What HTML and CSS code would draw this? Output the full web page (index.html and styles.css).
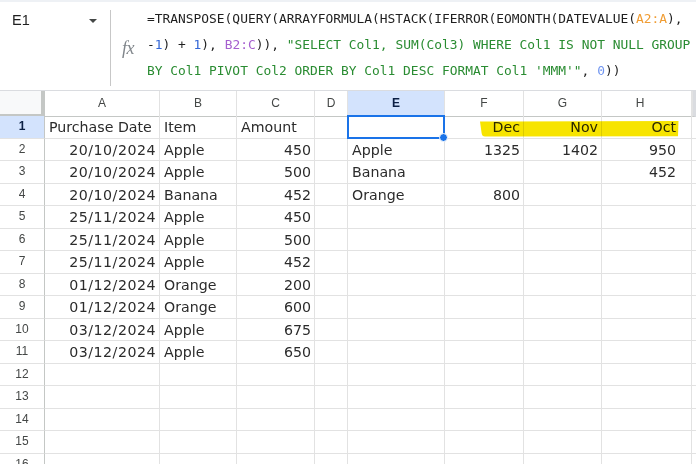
FILE: index.html
```html
<!DOCTYPE html>
<html>
<head>
<meta charset="utf-8">
<link rel="stylesheet" href="styles.css">
</head>
<body>
<div class="fbar">
  <div class="namebox">
    <span class="ref">E1</span>
    <span class="caret"></span>
  </div>
  <div class="fx">fx</div>
  <div class="formula">
    <div class="ln">=TRANSPOSE(QUERY(ARRAYFORMULA(HSTACK(IFERROR(EOMONTH(DATEVALUE(<span class="t-or">A2:A</span>),</div>
    <div class="ln">-<span class="t-num">1</span>) + <span class="t-num">1</span>), <span class="t-pu">B2:C</span>)), <span class="t-str">"SELECT Col1, SUM(Col3) WHERE Col1 IS NOT NULL GROUP</span></div>
    <div class="ln"><span class="t-str">BY Col1 PIVOT Col2 ORDER BY Col1 DESC FORMAT Col1 'MMM'"</span>, <span class="t-zero">0</span>))</div>
  </div>
</div>
<div class="sheet">
  <div class="row hdr">
    <div class="corner"></div><div class="ch">A</div><div class="ch">B</div><div class="ch">C</div><div class="ch">D</div><div class="ch on">E</div><div class="ch">F</div><div class="ch">G</div><div class="ch h">H</div><div class="ch last"></div>
  </div>
  <div class="row">
    <div class="rh on">1</div><div class="c">Purchase Date</div><div class="c">Item</div><div class="c">Amount</div><div class="c"></div><div class="c sel"><span class="handle"></span></div><div class="c r">Dec</div><div class="c r">Nov</div><div class="c r h">Oct</div><div class="c"></div>
  </div>
  <div class="row">
    <div class="rh">2</div><div class="c r d">20/10/2024</div><div class="c">Apple</div><div class="c r">450</div><div class="c"></div><div class="c">Apple</div><div class="c r">1325</div><div class="c r">1402</div><div class="c r h">950</div><div class="c"></div>
  </div>
  <div class="row">
    <div class="rh">3</div><div class="c r d">20/10/2024</div><div class="c">Apple</div><div class="c r">500</div><div class="c"></div><div class="c">Banana</div><div class="c"></div><div class="c"></div><div class="c r h">452</div><div class="c"></div>
  </div>
  <div class="row">
    <div class="rh">4</div><div class="c r d">20/10/2024</div><div class="c">Banana</div><div class="c r">452</div><div class="c"></div><div class="c">Orange</div><div class="c r">800</div><div class="c"></div><div class="c"></div><div class="c"></div>
  </div>
  <div class="row">
    <div class="rh">5</div><div class="c r d">25/11/2024</div><div class="c">Apple</div><div class="c r">450</div><div class="c"></div><div class="c"></div><div class="c"></div><div class="c"></div><div class="c"></div><div class="c"></div>
  </div>
  <div class="row">
    <div class="rh">6</div><div class="c r d">25/11/2024</div><div class="c">Apple</div><div class="c r">500</div><div class="c"></div><div class="c"></div><div class="c"></div><div class="c"></div><div class="c"></div><div class="c"></div>
  </div>
  <div class="row">
    <div class="rh">7</div><div class="c r d">25/11/2024</div><div class="c">Apple</div><div class="c r">452</div><div class="c"></div><div class="c"></div><div class="c"></div><div class="c"></div><div class="c"></div><div class="c"></div>
  </div>
  <div class="row">
    <div class="rh">8</div><div class="c r d">01/12/2024</div><div class="c">Orange</div><div class="c r">200</div><div class="c"></div><div class="c"></div><div class="c"></div><div class="c"></div><div class="c"></div><div class="c"></div>
  </div>
  <div class="row">
    <div class="rh">9</div><div class="c r d">01/12/2024</div><div class="c">Orange</div><div class="c r">600</div><div class="c"></div><div class="c"></div><div class="c"></div><div class="c"></div><div class="c"></div><div class="c"></div>
  </div>
  <div class="row">
    <div class="rh">10</div><div class="c r d">03/12/2024</div><div class="c">Apple</div><div class="c r">675</div><div class="c"></div><div class="c"></div><div class="c"></div><div class="c"></div><div class="c"></div><div class="c"></div>
  </div>
  <div class="row">
    <div class="rh">11</div><div class="c r d">03/12/2024</div><div class="c">Apple</div><div class="c r">650</div><div class="c"></div><div class="c"></div><div class="c"></div><div class="c"></div><div class="c"></div><div class="c"></div>
  </div>
  <div class="row">
    <div class="rh">12</div><div class="c"></div><div class="c"></div><div class="c"></div><div class="c"></div><div class="c"></div><div class="c"></div><div class="c"></div><div class="c"></div><div class="c"></div>
  </div>
  <div class="row">
    <div class="rh">13</div><div class="c"></div><div class="c"></div><div class="c"></div><div class="c"></div><div class="c"></div><div class="c"></div><div class="c"></div><div class="c"></div><div class="c"></div>
  </div>
  <div class="row">
    <div class="rh">14</div><div class="c"></div><div class="c"></div><div class="c"></div><div class="c"></div><div class="c"></div><div class="c"></div><div class="c"></div><div class="c"></div><div class="c"></div>
  </div>
  <div class="row">
    <div class="rh">15</div><div class="c"></div><div class="c"></div><div class="c"></div><div class="c"></div><div class="c"></div><div class="c"></div><div class="c"></div><div class="c"></div><div class="c"></div>
  </div>
  <div class="row">
    <div class="rh">16</div><div class="c"></div><div class="c"></div><div class="c"></div><div class="c"></div><div class="c"></div><div class="c"></div><div class="c"></div><div class="c"></div><div class="c"></div>
  </div>
  <svg class="marker" width="199" height="16" viewBox="0 0 199 16">
    <path d="M0 0.6 L198.5 0 L198 15.2 L5 15.6 Q2 15.6 1.6 12 Z" fill="#f7e400"/>
  </svg>
</div>
</body>
</html>
```
FILE: styles.css
```css
* { box-sizing: border-box; }
html, body { margin: 0; padding: 0; background: #fff; }
body { width: 696px; height: 464px; overflow: hidden; font-family: "DejaVu Sans", Verdana, sans-serif; }

.fbar {
  height: 91px;
  display: flex;
  border-top: 2px solid #eef1f5;
  border-bottom: 1px solid #dadce0;
}
.namebox {
  width: 111px;
  display: flex;
  align-items: flex-start;
  justify-content: space-between;
  padding: 1px 13px 0 12px;
  margin: 8px 0 4px;
  border-right: 1px solid #c7c7c7;
}
.ref { font-family: "Liberation Sans", Arial, sans-serif; font-size: 14.5px; color: #1f1f1f; line-height: 18px; }
.caret {
  width: 0; height: 0;
  margin-top: 8px;
  border-left: 4.5px solid transparent;
  border-right: 4.5px solid transparent;
  border-top: 4.5px solid #444746;
}
.fx {
  width: 36px;
  padding: 36px 0 0 11px;
  font-family: "Liberation Serif", serif;
  font-style: italic;
  font-size: 18px;
  color: #80868b;
  letter-spacing: -0.5px;
}
.formula {
  flex: 1;
  padding-top: 4px;
  font-family: "DejaVu Sans Mono", "Liberation Mono", monospace;
  font-size: 12.9px;
  line-height: 26px;
  color: #1f1f1f;
  overflow: hidden;
}
.ln { white-space: pre; height: 26px; }
.t-str { color: #2a8c32; }
.t-num { color: #3367d6; }
.t-or { color: #f09d34; }
.t-pu { color: #a55fcf; }
.t-zero { color: #6f94f0; }

.sheet { position: relative; }
.row {
  display: grid;
  grid-template-columns: 45px 115px 77px 78px 33px 97px 79px 78px 90px 1fr;
  height: 22.5px;
}
.row.hdr { height: 25px; }
.c {
  border-right: 1px solid #e2e2e2;
  border-bottom: 1px solid #e2e2e2;
  font-size: 14.2px;
  color: #2b2b2b;
  padding: 2px 3px 0 4px;
  line-height: 19.5px;
  white-space: nowrap;
  position: relative;
}
.c.r { text-align: right; }
.c.d { letter-spacing: 0.5px; padding-right: 3px; }
.c.h { padding-right: 15px; }
.rh {
  border-right: 1px solid #c4c7c5;
  border-bottom: 1px solid #e2e2e2;
  font-family: "Liberation Sans", Arial, sans-serif;
  font-size: 12px;
  color: #444746;
  text-align: center;
  line-height: 21px;
}
.rh.on { background: #d3e3fd; color: #0b1f44; font-weight: bold; }
.corner {
  background: #f8f9fa;
  border-right: 4px solid #c4c7c5;
  border-bottom: 3px solid #c4c7c5;
}
.ch {
  border-right: 1px solid #e2e2e2;
  border-bottom: 1px solid #c4c7c5;
  font-family: "Liberation Sans", Arial, sans-serif;
  font-size: 12px;
  color: #444746;
  text-align: center;
  line-height: 25px;
}
.ch.h { padding-right: 13px; }
.ch.on { background: #d3e3fd; color: #0b1f44; font-weight: bold; }
.ch.last { border-right: 3px solid #dadce0; border-left: 1px solid #e2e2e2; }
.sel { border: 2px solid #1a73e8; margin: -1px 0 0 -1px; width: calc(100% + 1px); height: calc(100% + 1px); }
.handle {
  position: absolute;
  right: -5px;
  bottom: -5px;
  width: 9px;
  height: 9px;
  border-radius: 50%;
  background: #1a73e8;
  border: 1px solid #fff;
  z-index: 2;
}
.marker {
  position: absolute;
  left: 480px;
  top: 30px;
  mix-blend-mode: multiply;
  pointer-events: none;
}
```
